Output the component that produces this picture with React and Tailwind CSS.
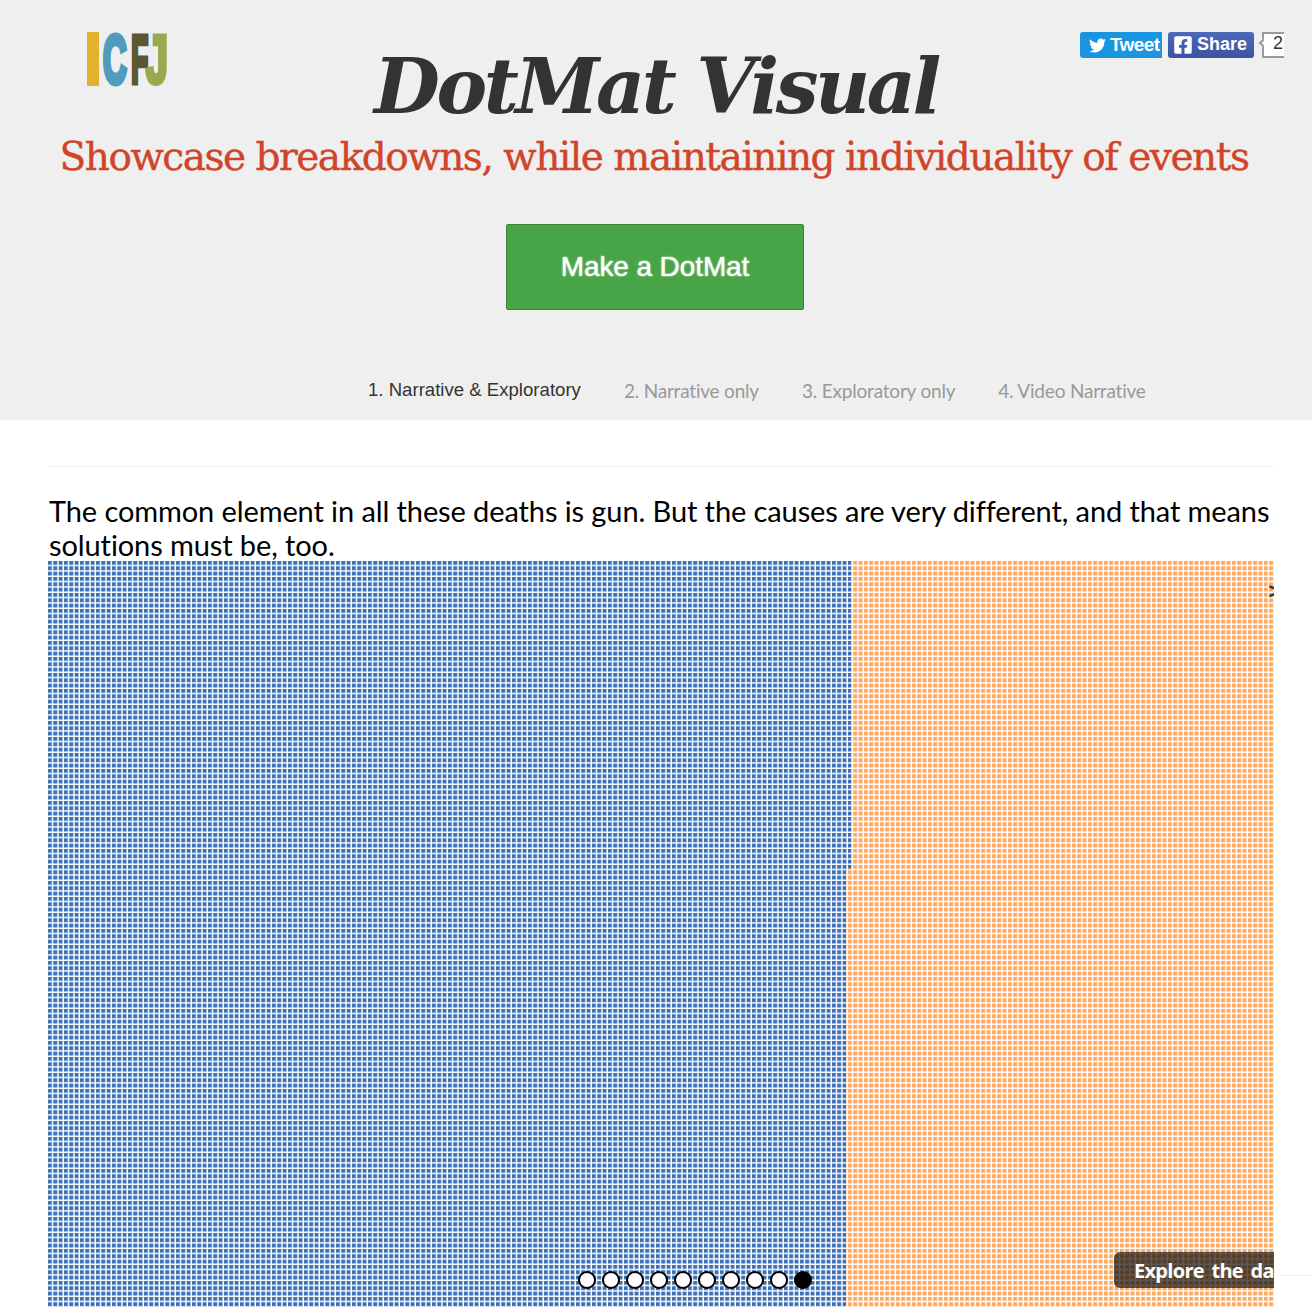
import React from 'react';
import { FaTwitter, FaFacebookSquare } from 'react-icons/fa';

const tabs = ['2. Narrative only', '3. Exploratory only', '4. Video Narrative'];
const dots = [0, 1, 2, 3, 4, 5, 6, 7, 8, 9];

function Logo() {
  return (
    <div className="flex h-[54px] w-[81px] font-['Liberation_Sans',sans-serif] text-[68px] font-bold leading-[54px]">
      <span className="w-[12px] bg-[#e0b22f]" />
      <span className="ml-[4px] w-[28px] origin-left scale-x-[0.48] text-[#519cbd] [-webkit-text-stroke:6px_#519cbd]">C</span>
      <span className="w-[15px] origin-left scale-x-[0.42] text-[#5c5733] [-webkit-text-stroke:5px_#5c5733]">F</span>
      <span className="w-[22px] origin-left scale-x-[0.58] text-[#99a94d] [-webkit-text-stroke:5px_#99a94d]">J</span>
    </div>
  );
}

function Social() {
  return (
    <div className="flex items-start pt-[32px] font-['Liberation_Sans',sans-serif] text-[19px] font-bold text-white">
      <div className="flex h-[26px] w-[82px] items-center gap-[5px] rounded-l-[3px] bg-[#1b95e0] pl-[9px]">
        <FaTwitter className="h-[17px] w-[17px]" />
        <span className="-ml-[1px] tracking-[-0.6px]">Tweet</span>
      </div>
      <div className="ml-[6px] flex h-[26px] w-[86px] items-center gap-[5px] rounded-[3px] bg-gradient-to-b from-[#4c69ba] to-[#3b55a0] pl-[5px]">
        <FaFacebookSquare className="h-[20px] w-[20px]" />
        <span className="-mt-[2px] -ml-[1px] text-[18px]">Share</span>
      </div>
      <div className="relative ml-[8px] flex h-[26px] w-[22px] items-center justify-end border-y-2 border-l-2 border-[#9a9a9a] bg-white pr-[1px] text-[18px] font-normal text-[#333]">
        <span className="absolute -left-[4px] top-[6px] h-[6px] w-[6px] rotate-45 border-b-2 border-l-2 border-[#9a9a9a] bg-white" />
        <span className="-mt-[3px]">2</span>
      </div>
    </div>
  );
}

function DotChart() {
  return (
    <svg className="block h-[746px] w-[1226px]" viewBox="0 0 1226 746">
      <defs>
        <pattern id="blueDots" width="5.333" height="5.333" patternUnits="userSpaceOnUse">
          <rect x="0" y="0" width="3.9" height="3.9" fill="#3d70b5" />
        </pattern>
        <pattern id="orangeDots" width="5.333" height="5.333" patternUnits="userSpaceOnUse">
          <rect x="0" y="0" width="3.9" height="3.9" fill="#ffa85c" />
        </pattern>
      </defs>
      <rect width="1226" height="746" fill="url(#orangeDots)" />
      <path d="M0 0H803V309H798V746H0Z" fill="#fff" />
      <path d="M0 0H803V309H798V746H0Z" fill="url(#blueDots)" />
    </svg>
  );
}

export default function App() {
  return (
    <div className="relative h-[1312px] overflow-hidden bg-white font-['Lato',sans-serif]">
      <header className="h-[420px] bg-[#efefef]">
        <div className="grid grid-cols-[1fr_auto_1fr]">
          <div className="pl-[87px] pt-[32px]">
            <Logo />
          </div>
          <h1 className="mt-[39px] font-['DejaVu_Serif',serif] text-[76px] font-bold italic leading-[96px] tracking-[-3.5px] text-[#333]">
            DotMat Visual
          </h1>
          <div className="flex justify-end pr-[28px]">
            <Social />
          </div>
        </div>
        <p className="-mt-[3px] pr-[4px] text-center font-['DejaVu_Serif',serif] text-[39px] leading-[50px] tracking-[-1.47px] text-[#d0452a] [-webkit-text-stroke:0.4px_#d0452a]">
          Showcase breakdowns, while maintaining individuality of events
        </p>
        <div className="mt-[42px] flex justify-center pr-[2px]">
          <button className="h-[86px] w-[298px] rounded-[2px] border border-[#398439] bg-[#47a447] font-['Liberation_Sans',sans-serif] text-[28px] tracking-[-0.1px] text-white [text-shadow:0_0_2px_#fff]">
            Make a DotMat
          </button>
        </div>
        <nav className="mt-[67px] flex items-center pl-[368px]">
          <span className="font-['Liberation_Sans',sans-serif] text-[18.6px] leading-[24px] text-[#333]">
            1. Narrative &amp; Exploratory
          </span>
          <div className="ml-[43px] flex gap-[43px] pt-[2px] text-[19px] leading-[24px] tracking-[-0.2px] text-[#999]">
            {tabs.map((t) => (
              <span key={t}>{t}</span>
            ))}
          </div>
        </nav>
      </header>

      <main className="ml-[48px] mr-[38px]">
        <hr className="mt-[46px] border-t border-[#eee]" />
        <p className="mt-[27px] pl-[1px] text-[29px] leading-[34px] tracking-[-0.1px] text-black">
          The common element in all these deaths is gun. But the causes are very different, and that means
          solutions must be, too.
        </p>

        <div className="relative -mt-[1px] h-[746px] w-[1226px] overflow-hidden">
          <DotChart />
          <span className="absolute left-[1219px] top-[18px] font-['DejaVu_Sans',sans-serif] text-[22px] font-bold leading-[24px] text-[#333]">
            &gt;
          </span>
          <div className="absolute left-[530px] top-[710px] flex gap-[6px]">
            {dots.map((d) => (
              <span
                key={d}
                className={d === 9 ? 'h-[18px] w-[18px] rounded-full border-[2.5px] border-black bg-black' : 'h-[18px] w-[18px] rounded-full border-[2.5px] border-black bg-white'}
              />
            ))}
          </div>
          <div className="absolute left-[1066px] top-[691px] h-[36px] w-[200px] rounded-[6px] bg-[#000]/65 pl-[20px] font-['Open_Sans',sans-serif] text-[20px] font-bold leading-[37px] tracking-[-0.7px] [word-spacing:3px] whitespace-nowrap text-white">
            Explore the data
          </div>
        </div>
      </main>

      <div className="absolute left-[1280px] top-[1275px] h-px w-[32px] bg-[#eee]" />
    </div>
  );
}
